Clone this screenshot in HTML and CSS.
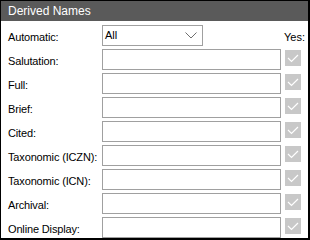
FILE: index.html
```
<!DOCTYPE html>
<html lang="en">
<head>
    <meta charset="UTF-8">
    <title>Derived Names</title>
    <link rel="stylesheet" href="styles.css">
</head>
<body>
    <div class="panel">
        <div class="panel-header">Derived Names</div>
        <div class="rows">
            <div class="row">
                <label>Automatic:</label>
                <div class="select">
                    <span>All</span>
                    <svg class="chevron" width="12" height="7" viewBox="0 0 12 7"><polyline points="0.5,0.5 6,6 11.5,0.5" fill="none" stroke="#6e6e6e" stroke-width="1"/></svg>
                </div>
                <span class="yes">Yes:</span>
            </div>
            <div class="row">
                <label>Salutation:</label>
                <div class="field"></div>
                <span class="check"><svg width="16" height="16" viewBox="0 0 16 16"><polyline points="3,8 6.5,11.5 13,5" fill="none" stroke="#fff" stroke-width="1.2"/></svg></span>
            </div>
            <div class="row">
                <label>Full:</label>
                <div class="field"></div>
                <span class="check"><svg width="16" height="16" viewBox="0 0 16 16"><polyline points="3,8 6.5,11.5 13,5" fill="none" stroke="#fff" stroke-width="1.2"/></svg></span>
            </div>
            <div class="row">
                <label>Brief:</label>
                <div class="field"></div>
                <span class="check"><svg width="16" height="16" viewBox="0 0 16 16"><polyline points="3,8 6.5,11.5 13,5" fill="none" stroke="#fff" stroke-width="1.2"/></svg></span>
            </div>
            <div class="row">
                <label>Cited:</label>
                <div class="field"></div>
                <span class="check"><svg width="16" height="16" viewBox="0 0 16 16"><polyline points="3,8 6.5,11.5 13,5" fill="none" stroke="#fff" stroke-width="1.2"/></svg></span>
            </div>
            <div class="row">
                <label>Taxonomic (ICZN):</label>
                <div class="field"></div>
                <span class="check"><svg width="16" height="16" viewBox="0 0 16 16"><polyline points="3,8 6.5,11.5 13,5" fill="none" stroke="#fff" stroke-width="1.2"/></svg></span>
            </div>
            <div class="row">
                <label>Taxonomic (ICN):</label>
                <div class="field"></div>
                <span class="check"><svg width="16" height="16" viewBox="0 0 16 16"><polyline points="3,8 6.5,11.5 13,5" fill="none" stroke="#fff" stroke-width="1.2"/></svg></span>
            </div>
            <div class="row">
                <label>Archival:</label>
                <div class="field"></div>
                <span class="check"><svg width="16" height="16" viewBox="0 0 16 16"><polyline points="3,8 6.5,11.5 13,5" fill="none" stroke="#fff" stroke-width="1.2"/></svg></span>
            </div>
            <div class="row">
                <label>Online Display:</label>
                <div class="field"></div>
                <span class="check"><svg width="16" height="16" viewBox="0 0 16 16"><polyline points="3,8 6.5,11.5 13,5" fill="none" stroke="#fff" stroke-width="1.2"/></svg></span>
            </div>
        </div>
    </div>
</body>
</html>
```

FILE: styles.css
```
body {
    margin: 0;
    font-family: "Liberation Sans", Arial, sans-serif;
    font-size: 11px;
    color: #000;
    background: #fff;
}
.panel {
    width: 310px;
    height: 240px;
    box-sizing: border-box;
    border-top: 1px solid #000;
    border-left: 1px solid #000;
    border-right: 2px solid #000;
    border-bottom: 2px solid #000;
    background: #fff;
}
.panel-header {
    height: 20px;
    line-height: 20px;
    padding-left: 7px;
    background-color: #5a5a5a;
    color: #fff;
    font-size: 12px;
}
.rows {
    display: flex;
    flex-direction: column;
    gap: 3px;
    padding: 4px 0 0 7px;
}
.row {
    display: grid;
    grid-template-columns: 90px 179px 16px;
    column-gap: 4px;
    height: 21px;
    align-items: center;
}
.row label {
    padding-top: 2px;
    letter-spacing: -0.15px;
    white-space: nowrap;
}
.field, .select {
    height: 21px;
    box-sizing: border-box;
    border: 1px solid #a0a0a0;
    background: #fff;
}
.select {
    width: 101px;
    display: flex;
    align-items: center;
    justify-content: space-between;
    padding: 0 5px 0 2px;
}
.select span {
    padding-bottom: 1px;
}
.chevron {
    display: block;
}
.yes {
    white-space: nowrap;
    padding-top: 3px;
    margin-left: -1px;
}
.check {
    align-self: start;
    margin-top: 1px;
    width: 16px;
    height: 16px;
    background: #c8c8c8;
    display: flex;
}
.check svg {
    display: block;
}
```
